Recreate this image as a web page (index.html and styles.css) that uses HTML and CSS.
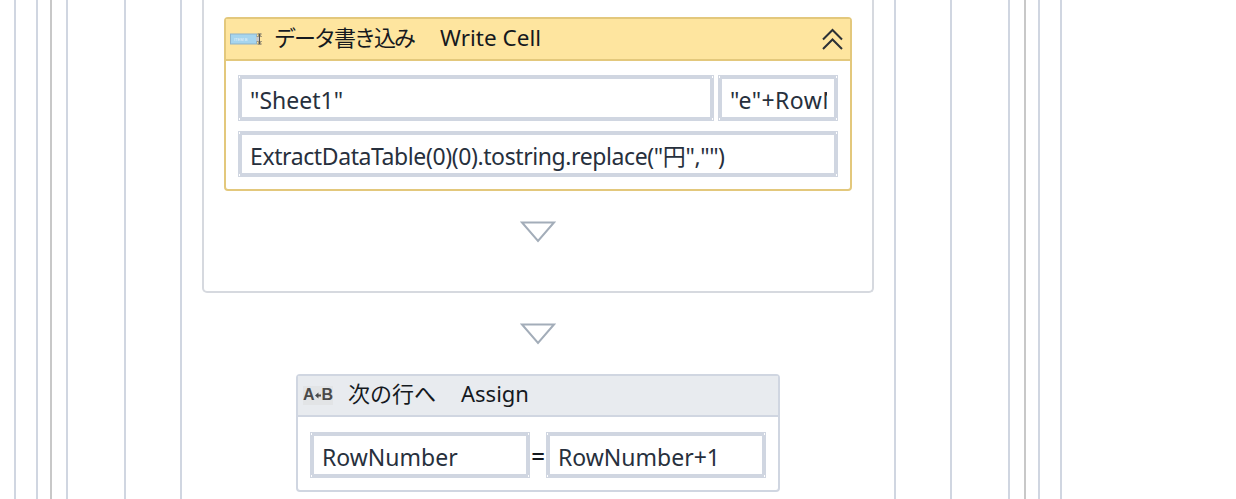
FILE: index.html
```html
<!DOCTYPE html>
<html lang="ja">
<head>
<meta charset="utf-8">
<title>Workflow</title>
<link rel="stylesheet" href="styles.css">
</head>
<body>
<div class="frame f1"><div class="frame f2"><div class="frame f3 grey"><div class="frame f4"><div class="frame f5"><div class="frame f6">
  <div class="seq">
    <div class="activity write">
      <div class="head">
        <svg class="ico-write" width="34" height="12" viewBox="0 0 34 12">
          <rect x="0.500" y="1" width="26" height="10" fill="#a6d5ee" stroke="#8fb3c9"/>
          <text x="4" y="8" class="ico-small">ITEM B</text>
          <rect x="26" y="4" width="4" height="4" fill="#c8c8c8"/>
          <path d="M29.500 1v10M27.500 1h4M27.500 11h4M27.500 4l2-2 2 2M27.500 8l2 2 2-2" fill="none" stroke="#555" stroke-width="1"/>
        </svg>
        <span class="title"><span class="jp-tight">データ書き込み</span><span class="sp-w"> </span><span class="lat-w">Write Cell</span></span>
        <svg class="chev" width="23" height="23" viewBox="0 0 23 23">
          <path d="M2 11.500 11.500 2 21 11.500M2 21 11.500 11.500 21 21" fill="none" stroke="#2c3136" stroke-width="2"/>
        </svg>
      </div>
      <div class="body">
        <div class="row">
          <div class="field grow"><span class="txt">"Sheet1"</span></div>
          <div class="field small"><span class="txt loose">"e"+RowNumber</span></div>
        </div>
        <div class="row">
          <div class="field grow"><span class="txt tight">ExtractDataTable(0)(0).tostring.replace("円","")</span></div>
        </div>
      </div>
    </div>
    <svg class="tri t1" width="36" height="22" viewBox="0 0 36 22"><path d="M2 1.500H34L18 20Z" fill="none" stroke="#a3adb9" stroke-width="2"/></svg>
  </div>
  <svg class="tri t2" width="36" height="22" viewBox="0 0 36 22"><path d="M2 1.500H34L18 20Z" fill="none" stroke="#a3adb9" stroke-width="2"/></svg>
  <div class="activity assign">
    <div class="head">
      <span class="ico-assign">A<svg width="10" height="9" viewBox="0 0 10 9"><path d="M0 4.500 5 0v3h5v3H5v3Z" fill="#4a4a4a"/></svg>B</span>
      <span class="title">次の行へ　<span class="lat-a">Assign</span></span>
    </div>
    <div class="body">
      <div class="row eq">
        <div class="field half"><span class="txt">RowNumber</span></div>
        <span class="equals">=</span>
        <div class="field half"><span class="txt">RowNumber+1</span></div>
      </div>
    </div>
  </div>
</div></div></div></div></div></div>
</body>
</html>
```
FILE: styles.css
```css
html, body {
  margin: 0;
  height: 499px;
  overflow: hidden;
  background: #fff;
}
body {
  padding: 0 174px 0 14px;
  font-family: "Noto Sans", "Noto Sans CJK JP", sans-serif;
  color: #1f2733;
}
.frame {
  box-sizing: border-box;
  height: 499px;
  border-left: 2px solid #d0d6e1;
  border-right: 2px solid #d0d6e1;
}
.grey { border-color: #c8c8c8; }
.f1 { padding: 0 20px; }
.f2 { padding: 0 12px; }
.f3 { padding: 0 14px; }
.f4 { padding: 0 56px; }
.f5 { padding: 0 54px; }
.f6 {
  padding: 0 20px;
  display: flex;
  flex-direction: column;
  align-items: center;
}
.seq {
  box-sizing: border-box;
  width: 100%;
  height: 293px;
  padding: 17px 20px 0;
  border: 2px solid #d6d9df;
  border-top: none;
  border-radius: 0 0 5px 5px;
  display: flex;
  flex-direction: column;
  align-items: center;
}
.activity {
  box-sizing: border-box;
  border-radius: 4px;
  border: 2px solid;
  background: #fff;
  flex: none;
}
.write { width: 100%; height: 174px; border-color: #e3c87c; }
.assign { width: 484px; height: 118px; border-color: #d0d6e1; }
.head {
  box-sizing: border-box;
  display: flex;
  align-items: center;
  height: 42px;
  border-bottom: 2px solid;
}
.write .head { background: #fee59f; border-color: #e3c87c; }
.assign .head { background: #e8ebef; border-color: #d0d6e1; height: 41px; }
.title {
  font-size: 22px;
  color: #15191e;
  white-space: pre;
  font-weight: 400;
  padding-bottom: 7px;
}
.write .title { padding-bottom: 5px; }
.jp-tight { letter-spacing: -2px; }
.sp-w { display: inline-block; width: 26px; }
.lat-w { font-size: 22.500px; }
.lat-a { font-size: 22px; margin-left: 3px; }
.ico-write { margin-left: 4px; margin-right: 10px; flex: none; }
.ico-small { font-size: 4px; fill: #e8f4fb; font-family: "Liberation Sans", sans-serif; }
.chev { margin-left: auto; margin-right: 6px; flex: none; }
.ico-assign {
  display: flex;
  align-items: center;
  margin-left: 5px;
  margin-right: 15px;
  width: 30px;
  padding-bottom: 1px;
  font: 700 16px "Liberation Sans", sans-serif;
  color: #4a4a4a;
  background: #e2e4e6;
}
.body { padding: 14px 12px 0; }
.assign .body { padding-top: 15px; }
.row { display: flex; gap: 4px; margin-bottom: 10px; }
.eq { gap: 0; align-items: center; }
.field {
  box-sizing: border-box;
  position: relative;
  height: 46px;
  border: 4px solid #d0d6e1;
  padding: 0 8px;
  font-size: 23px;
  line-height: 42px;
  white-space: nowrap;
  font-weight: 400;
  color: #27303d;
}
.field::before {
  content: "";
  position: absolute;
  inset: -3px;
  background:
    linear-gradient(#fff, #fff) left top / 1px 2px no-repeat,
    linear-gradient(#fff, #fff) right top / 1px 2px no-repeat,
    linear-gradient(#fff, #fff) left bottom / 1px 2px no-repeat,
    linear-gradient(#fff, #fff) right bottom / 1px 2px no-repeat;
}
.txt { display: block; height: 38px; overflow: hidden; }
.tight { letter-spacing: -0.400px; }
.loose { letter-spacing: 0.450px; }
.grow { flex: 1; min-width: 0; }
.small { width: 120px; flex: none; padding-right: 7px; }
.half { width: 220px; flex: none; }
.equals { width: 16px; text-align: center; font-size: 24px; font-weight: 500; color: #15191e; }
.tri { flex: none; display: block; }
.t1 { margin-top: 30px; }
.t2 { margin-top: 30px; margin-bottom: 29px; }
```
